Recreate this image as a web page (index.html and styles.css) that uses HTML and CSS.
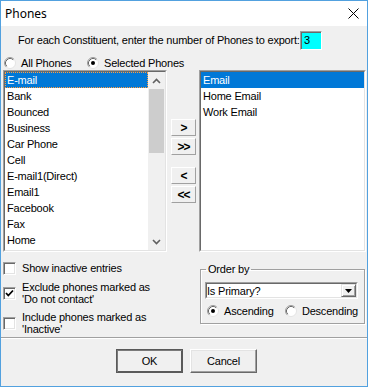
FILE: index.html
```html
<!DOCTYPE html>
<html>
<head>
<meta charset="utf-8">
<title>Phones</title>
<link rel="stylesheet" href="styles.css">
</head>
<body>
<div class="win">
  <div class="titlebar">
    <span class="title">Phones</span>
    <svg class="close" width="11" height="11" viewBox="0 0 11 11"><path d="M0.5 0.5 L10.5 10.5 M10.5 0.5 L0.5 10.5" stroke="#000" stroke-width="1" fill="none"/></svg>
  </div>
  <div class="body">
    <div class="prompt">
      <span class="prompt-text">For each Constituent, enter the number of Phones to export:</span>
      <div class="numbox">3</div>
    </div>
    <div class="radios">
      <label class="radio">
        <svg width="12" height="12" viewBox="0 0 12 12"><circle cx="6" cy="6" r="5.5" fill="#fff" stroke="#e3e3e3"/><path d="M2.11 9.89 A5.5 5.5 0 0 1 9.89 2.11" fill="none" stroke="#a0a0a0"/><path d="M2.82 9.18 A4.5 4.5 0 0 1 9.18 2.82" fill="none" stroke="#696969"/></svg>
        <span>All Phones</span>
      </label>
      <label class="radio">
        <svg width="12" height="12" viewBox="0 0 12 12"><circle cx="6" cy="6" r="5.5" fill="#fff" stroke="#e3e3e3"/><path d="M2.11 9.89 A5.5 5.5 0 0 1 9.89 2.11" fill="none" stroke="#a0a0a0"/><path d="M2.82 9.18 A4.5 4.5 0 0 1 9.18 2.82" fill="none" stroke="#696969"/><circle cx="6" cy="6" r="2" fill="#000"/></svg>
        <span>Selected Phones</span>
      </label>
    </div>
    <div class="lists">
      <div class="listbox left">
        <div class="lb-in">
          <div class="items">
            <div class="item sel focus">E-mail</div>
            <div class="item">Bank</div>
            <div class="item">Bounced</div>
            <div class="item">Business</div>
            <div class="item">Car Phone</div>
            <div class="item">Cell</div>
            <div class="item">E-mail1(Direct)</div>
            <div class="item">Email1</div>
            <div class="item">Facebook</div>
            <div class="item">Fax</div>
            <div class="item">Home</div>
          </div>
          <div class="vscroll">
            <div class="sb-btn"><svg width="9" height="6" viewBox="0 0 9 6"><path d="M1 5 L4.5 1.5 L8 5" fill="none" stroke="#606060" stroke-width="1.6"/></svg></div>
            <div class="thumb"></div>
            <div class="sb-track"></div>
            <div class="sb-btn"><svg width="9" height="6" viewBox="0 0 9 6"><path d="M1 1 L4.5 4.5 L8 1" fill="none" stroke="#606060" stroke-width="1.6"/></svg></div>
          </div>
        </div>
      </div>
      <div class="movers">
        <button class="mv">&gt;</button>
        <button class="mv m2">&gt;&gt;</button>
        <button class="mv m3">&lt;</button>
        <button class="mv m2">&lt;&lt;</button>
      </div>
      <div class="listbox right">
        <div class="lb-in">
          <div class="items">
            <div class="item sel">Email</div>
            <div class="item">Home Email</div>
            <div class="item">Work Email</div>
          </div>
        </div>
      </div>
    </div>
    <div class="lower">
      <div class="checks">
        <label class="chk c1">
          <span class="box"></span>
          <span class="chk-text">Show inactive entries</span>
        </label>
        <label class="chk c2">
          <span class="box"><svg width="9" height="9" viewBox="0 0 9 9"><path d="M1 4 L3.3 6.5 L8 1.5" fill="none" stroke="#000" stroke-width="1.8"/></svg></span>
          <span class="chk-text">Exclude phones marked as<br>'Do not contact'</span>
        </label>
        <label class="chk c3">
          <span class="box"></span>
          <span class="chk-text">Include phones marked as<br>'Inactive'</span>
        </label>
      </div>
      <fieldset class="group">
        <legend>Order by</legend>
        <div class="select">
          <div class="sel-in">
            <span class="sel-text">Is Primary?</span>
            <span class="dd"><svg width="7" height="4" viewBox="0 0 7 4"><path d="M0 0 H7 L3.5 4 Z" fill="#000"/></svg></span>
          </div>
        </div>
        <div class="g-radios">
          <label class="radio">
            <svg width="12" height="12" viewBox="0 0 12 12"><circle cx="6" cy="6" r="5.5" fill="#fff" stroke="#e3e3e3"/><path d="M2.11 9.89 A5.5 5.5 0 0 1 9.89 2.11" fill="none" stroke="#a0a0a0"/><path d="M2.82 9.18 A4.5 4.5 0 0 1 9.18 2.82" fill="none" stroke="#696969"/><circle cx="6" cy="6" r="2" fill="#000"/></svg>
            <span>Ascending</span>
          </label>
          <label class="radio">
            <svg width="12" height="12" viewBox="0 0 12 12"><circle cx="6" cy="6" r="5.5" fill="#fff" stroke="#e3e3e3"/><path d="M2.11 9.89 A5.5 5.5 0 0 1 9.89 2.11" fill="none" stroke="#a0a0a0"/><path d="M2.82 9.18 A4.5 4.5 0 0 1 9.18 2.82" fill="none" stroke="#696969"/></svg>
            <span>Descending</span>
          </label>
        </div>
      </fieldset>
    </div>
    <div class="sep"></div>
    <div class="actions">
      <button class="btn default">OK</button>
      <button class="btn">Cancel</button>
    </div>
  </div>
</div>
</body>
</html>
```
FILE: styles.css
```css
* { box-sizing: border-box; }
html, body { margin: 0; padding: 0; }
body {
  width: 368px;
  height: 387px;
  overflow: hidden;
  background: #fff;
  font-family: "Liberation Sans", Arial, sans-serif;
  font-size: 11px;
  letter-spacing: -0.2px;
  color: #000;
}
button { font: inherit; color: inherit; letter-spacing: inherit; padding: 0; margin: 0; }
label { cursor: default; }

.win {
  width: 368px;
  height: 387px;
  border: 1px solid #52a1df;
  display: flex;
  flex-direction: column;
}
.titlebar {
  height: 25px;
  flex: none;
  background: #fff;
  display: flex;
  align-items: center;
}
.title {
  font-family: "Noto Sans", "Open Sans", sans-serif;
  font-size: 12px;
  letter-spacing: 0;
  margin-left: 4px;
}
.close { margin-left: auto; margin-right: 8px; display: block; }

.body {
  flex: 1;
  background: #f0f0f0;
  display: flex;
  flex-direction: column;
}

.prompt {
  margin-top: 5px;
  height: 18px;
  display: flex;
  align-items: center;
  padding-left: 17px;
}
.prompt-text { width: 282px; white-space: nowrap; }
.numbox {
  width: 22px;
  height: 19px;
  background: #00ffff;
  border: 1px solid;
  border-color: #a0a0a0 #fff #fff #a0a0a0;
  box-shadow: inset 1px 1px 0 #696969;
  padding-left: 3px;
  line-height: 17px;
}

.radios {
  margin-top: 7px;
  height: 13px;
  display: flex;
  align-items: center;
  padding-left: 3px;
}
.radio { display: flex; align-items: center; gap: 5px; white-space: nowrap; }
.radio svg { display: block; flex: none; }
.radios .radio:first-child { width: 83px; }

.lists {
  margin-top: 1px;
  height: 182px;
  display: flex;
  flex: none;
}
.listbox {
  height: 182px;
  border: 1px solid;
  border-color: #a0a0a0 #fff #fff #a0a0a0;
}
.lb-in {
  height: 100%;
  border: 1px solid;
  border-color: #696969 #e3e3e3 #e3e3e3 #696969;
  background: #fff;
  display: flex;
  overflow: hidden;
}
.listbox.left { margin-left: 2px; width: 164px; }
.listbox.right { width: 167px; }
.items { flex: 1; min-width: 0; }
.item {
  height: 16px;
  line-height: 16px;
  padding-left: 2px;
  white-space: nowrap;
}
.item.sel { background: #0078d7; color: #fff; }
.item.focus { outline: 1px dotted #ff9c3f; outline-offset: -1px; }

.vscroll {
  width: 17px;
  flex: none;
  background: #f0f0f0;
  display: flex;
  flex-direction: column;
}
.sb-btn {
  height: 17px;
  flex: none;
  display: flex;
  align-items: center;
  justify-content: center;
}
.sb-btn svg { display: block; }
.thumb { height: 64px; flex: none; background: #cdcdcd; margin: 0 1px; }
.sb-track { flex: 1; }

.movers {
  width: 32px;
  flex: none;
  display: flex;
  flex-direction: column;
  padding-top: 49px;
  padding-left: 4px;
}
.mv {
  width: 25px;
  height: 17px;
  background: #f0f0f0;
  border: 1px solid;
  border-color: #fff #a0a0a0 #a0a0a0 #fff;
  font-weight: bold;
  font-size: 12px;
  line-height: 14px;
  letter-spacing: -1px;
}
.mv.m2 { margin-top: 2px; }
.mv.m3 { margin-top: 12px; }

.lower {
  margin-top: 10px;
  height: 74px;
  flex: none;
  display: flex;
}
.checks {
  width: 199px;
  flex: none;
  padding-left: 2px;
  display: flex;
  flex-direction: column;
}
.chk { display: flex; align-items: center; line-height: 12px; }
.chk.c1 { height: 12px; }
.chk.c2 { margin-top: 7px; }
.chk.c3 { margin-top: 6px; }
.box {
  width: 13px;
  height: 13px;
  flex: none;
  margin-right: 6px;
  background: #fff;
  border: 1px solid;
  border-color: #a0a0a0 #fff #fff #a0a0a0;
  box-shadow: inset 1px 1px 0 #696969, inset -1px -1px 0 #e3e3e3;
  display: flex;
  align-items: center;
  justify-content: center;
}
.box svg { display: block; }
.chk-text { white-space: nowrap; }

.group {
  margin: 1px 0 0 0;
  width: 165px;
  height: 61px;
  padding: 0 6px 5px 4px;
  border: 1px solid #a0a0a0;
  box-shadow: inset 1px 1px 0 #fff, 1px 1px 0 #fff;
  min-width: 0;
}
.group legend {
  padding: 0 2px;
  margin-left: 1px;
  line-height: 12px;
}
.select {
  margin-top: 7px;
  width: 153px;
  height: 17px;
  border: 1px solid;
  border-color: #a0a0a0 #fff #fff #a0a0a0;
}
.sel-in {
  height: 100%;
  border: 1px solid;
  border-color: #696969 #e3e3e3 #e3e3e3 #696969;
  background: #fff;
  display: flex;
  align-items: center;
}
.sel-text { flex: 1; white-space: nowrap; }
.dd {
  width: 15px;
  height: 13px;
  flex: none;
  background: #f0f0f0;
  border: 1px solid;
  border-color: #e3e3e3 #696969 #696969 #e3e3e3;
  box-shadow: inset 1px 1px 0 #fff, inset -1px -1px 0 #a0a0a0;
  display: flex;
  align-items: center;
  justify-content: center;
}
.dd svg { display: block; }
.g-radios {
  margin-top: 5px;
  height: 13px;
  display: flex;
  align-items: center;
  padding-left: 2px;
}
.g-radios .radio:first-child { width: 78px; }

.sep {
  margin-top: 1px;
  height: 2px;
  flex: none;
  border-top: 1px solid #a0a0a0;
  border-bottom: 1px solid #fff;
}
.actions {
  margin-top: 10px;
  display: flex;
  gap: 7px;
  padding-left: 115px;
}
.btn {
  width: 67px;
  height: 24px;
  background: #f0f0f0;
  border: 1px solid;
  border-color: #fff #696969 #696969 #fff;
  box-shadow: inset -1px -1px 0 #a0a0a0, inset 1px 1px 0 #e3e3e3;
}
.btn.default {
  border: 1px solid #5a5a5a;
  box-shadow: inset 1px 1px 0 #7a7a7a, inset -1px -1px 0 #5a5a5a;
}
```
